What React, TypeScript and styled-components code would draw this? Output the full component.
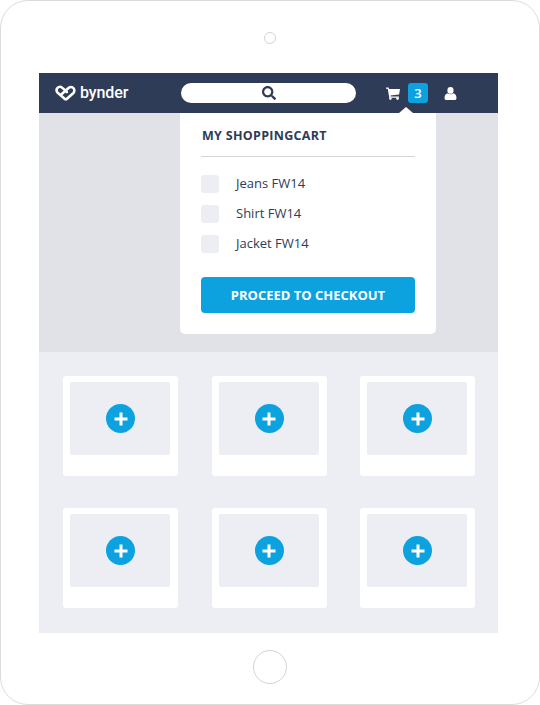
import React from "react";
import styled, { createGlobalStyle } from "styled-components";
import { FaSearch } from "react-icons/fa";

const Global = createGlobalStyle`
  html, body { margin: 0; padding: 0; background: #fff; }
  * { box-sizing: border-box; }
  body { font-family: "Open Sans", "Liberation Sans", sans-serif; }
`;

const Device = styled.div`
  width: 540px;
  height: 705px;
  border: 1px solid #dcdcdc;
  border-radius: 28px;
  background: #fff;
  display: flex;
  flex-direction: column;
  align-items: center;
`;
const Camera = styled.div`
  width: 12px;
  height: 12px;
  margin-top: 31px;
  margin-bottom: 29px;
  border-radius: 50%;
  border: 1px solid #d4d4d4;
`;
const Screen = styled.div`
  width: 459px;
  height: 560px;
  margin-left: -3px;
  display: flex;
  flex-direction: column;
`;
const Header = styled.header`
  height: 40px;
  flex: none;
  background: #2e3c57;
  display: flex;
  align-items: center;
  position: relative;
  padding-left: 16px;
`;
const Logo = styled.div`
  width: 126px;
  display: flex;
  align-items: center;
  gap: 4px;
  color: #fff;
  font-family: "Roboto", sans-serif;
  font-size: 16px;
  font-weight: 500;
  line-height: 20px;
  letter-spacing: -0.1px;
  & svg { flex: none; }
`;
const Search = styled.div`
  width: 175px;
  height: 20px;
  border-radius: 10px;
  background: #fff;
  color: #2e3c57;
  display: flex;
  align-items: center;
  justify-content: center;
  font-size: 14px;
  margin-right: 30px;
`;
const IconSlot = styled.span`
  display: flex;
  flex: none;
  margin-top: 1px;
`;
const Badge = styled.span`
  width: 20px;
  height: 20px;
  margin-left: 8px;
  margin-right: 16px;
  border-radius: 3px;
  background: #0ca2df;
  color: #fff;
  font-size: 13px;
  font-weight: 600;
  line-height: 20px;
  text-align: center;
`;
const Caret = styled.span`
  position: absolute;
  left: 360px;
  bottom: 0;
  width: 0;
  height: 0;
  border-left: 7px solid transparent;
  border-right: 7px solid transparent;
  border-bottom: 6px solid #fff;
`;
const Hero = styled.section`
  height: 239px;
  flex: none;
  background: #e1e2e7;
  padding-left: 141px;
`;
const Cart = styled.div`
  width: 256px;
  height: 221px;
  background: #fff;
  border-radius: 0 0 5px 5px;
  padding: 0 21px;
`;
const CartTitle = styled.h2`
  margin: 0;
  height: 44px;
  border-bottom: 1px solid #d6d6d9;
  color: #2e3c57;
  font-size: 12.5px;
  font-weight: 700;
  letter-spacing: 0.3px;
  line-height: 18px;
  padding: 14px 0 0 1px;
`;
const CartList = styled.ul`
  list-style: none;
  margin: 18px 0 24px;
  padding: 0;
  display: flex;
  flex-direction: column;
  gap: 12px;
`;
const CartRow = styled.li`
  display: flex;
  align-items: center;
  height: 18px;
  gap: 17px;
  color: #2e3c57;
  font-size: 13px;
`;
const CartLabel = styled.span`
  padding-bottom: 2px;
`;
const Check = styled.span`
  width: 18px;
  height: 18px;
  border-radius: 3px;
  background: #edeef3;
`;
const Checkout = styled.button`
  display: block;
  width: 100%;
  height: 36px;
  border: 0;
  border-radius: 4px;
  background: #0ca2df;
  color: #fff;
  font-family: inherit;
  font-size: 13px;
  font-weight: 700;
`;
const Assets = styled.section`
  flex: 1;
  background: #edeef3;
  padding: 24px 23px 0 24px;
  display: grid;
  grid-template-columns: repeat(3, 115px);
  grid-auto-rows: 100px;
  justify-content: space-between;
  row-gap: 32px;
`;
const AssetCard = styled.div`
  background: #fff;
  border-radius: 3px;
  padding: 6px 8px 21px 7px;
  display: flex;
`;
const AssetThumb = styled.div`
  flex: 1;
  background: #edeef3;
  border-radius: 2px;
  display: flex;
  align-items: center;
  justify-content: center;
`;
const AddButton = styled.span`
  width: 29px;
  height: 29px;
  border-radius: 50%;
  background: #0ca2df;
  display: flex;
  align-items: center;
  justify-content: center;
  margin-left: 1px;
`;
const HomeButton = styled.div`
  width: 34px;
  height: 34px;
  margin-top: 17px;
  border-radius: 50%;
  border: 1px solid #d4d4d4;
`;

const BynderMark = () => (
  <svg width="21" height="16" viewBox="0 0 21 16" fill="none">
    <path
      d="M10.2 14.2 L2.4 7.6 C0.4 4.8 2.4 1.8 5 1.8 C6.8 1.8 8.2 3.2 11.8 7"
      stroke="#fff"
      strokeWidth="2.6"
      strokeLinecap="round"
      strokeLinejoin="round"
    />
    <path
      d="M6.8 9 L13.8 2.8 C16.2 1 19.4 2.6 19.4 5.4 C19.4 6.8 18.6 7.8 17.6 8.8 L11.4 14.2"
      stroke="#fff"
      strokeWidth="2.6"
      strokeLinecap="round"
      strokeLinejoin="round"
    />
  </svg>
);

const CartIcon = () => (
  <svg width="14" height="13" viewBox="0 0 14 13" fill="#fff">
    <path d="M0 0.5h2.6l0.5 1.5H14l-0.9 5.6-8.6 0.9 0.2 1h8.3v1.2H3.3L1.7 1.7H0z" />
    <circle cx="4.4" cy="11.6" r="1.3" />
    <circle cx="11.5" cy="11.6" r="1.3" />
  </svg>
);

const UserIcon = () => (
  <svg width="13" height="13" viewBox="0 0 13 13" fill="#fff">
    <ellipse cx="6.5" cy="3.4" rx="3.1" ry="3.4" />
    <path d="M3.5 6.2 C1.4 7 0.5 8.6 0.5 11 C0.5 12.4 1.4 13 2.4 13 H10.6 C11.6 13 12.5 12.4 12.5 11 C12.5 8.6 11.6 7 9.5 6.2 C8 7.6 5 7.6 3.5 6.2z" />
  </svg>
);

const Plus = () => (
  <svg width="14" height="14" viewBox="0 0 14 14">
    <path d="M5.5 0.5h3v5h5v3h-5v5h-3v-5h-5v-3h5z" fill="#fff" />
  </svg>
);

const items = ["Jeans FW14", "Shirt FW14", "Jacket FW14"];

export default function App() {
  return (
    <>
      <Global />
      <Device>
        <Camera />
        <Screen>
          <Header>
            <Logo>
              <BynderMark />
              bynder
            </Logo>
            <Search>
              <FaSearch />
            </Search>
            <IconSlot>
              <CartIcon />
            </IconSlot>
            <Badge>3</Badge>
            <IconSlot>
              <UserIcon />
            </IconSlot>
            <Caret />
          </Header>
          <Hero>
            <Cart>
              <CartTitle>MY SHOPPINGCART</CartTitle>
              <CartList>
                {items.map((item) => (
                  <CartRow key={item}>
                    <Check />
                    <CartLabel>{item}</CartLabel>
                  </CartRow>
                ))}
              </CartList>
              <Checkout>PROCEED TO CHECKOUT</Checkout>
            </Cart>
          </Hero>
          <Assets>
            {Array.from({ length: 6 }, (_, i) => (
              <AssetCard key={i}>
                <AssetThumb>
                  <AddButton>
                    <Plus />
                  </AddButton>
                </AssetThumb>
              </AssetCard>
            ))}
          </Assets>
        </Screen>
        <HomeButton />
      </Device>
    </>
  );
}
